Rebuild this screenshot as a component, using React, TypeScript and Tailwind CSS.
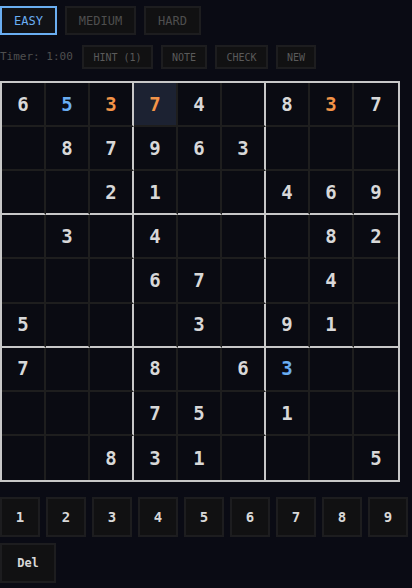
import React from "react";

type Cell = { v: number | null; c?: "blue" | "orange"; sel?: boolean };

const B = (v: number): Cell => ({ v, c: "blue" });
const O = (v: number, sel = false): Cell => ({ v, c: "orange", sel });
const N = (v: number | null): Cell => ({ v });

const board: Cell[][] = [
  [N(6), B(5), O(3), O(7, true), N(4), N(null), N(8), O(3), N(7)],
  [N(null), N(8), N(7), N(9), N(6), N(3), N(null), N(null), N(null)],
  [N(null), N(null), N(2), N(1), N(null), N(null), N(4), N(6), N(9)],
  [N(null), N(3), N(null), N(4), N(null), N(null), N(null), N(8), N(2)],
  [N(null), N(null), N(null), N(6), N(7), N(null), N(null), N(4), N(null)],
  [N(5), N(null), N(null), N(null), N(3), N(null), N(9), N(1), N(null)],
  [N(7), N(null), N(null), N(8), N(null), N(6), B(3), N(null), N(null)],
  [N(null), N(null), N(null), N(7), N(5), N(null), N(1), N(null), N(null)],
  [N(null), N(null), N(8), N(3), N(1), N(null), N(null), N(null), N(5)],
];

const mono = { fontFamily: '"DejaVu Sans Mono", "Liberation Mono", monospace' };

function SudokuCell({ cell, r, c }: { cell: Cell; r: number; c: number }) {
  const right =
    c === 8 ? "" : c === 2 || c === 5 ? "border-r-2 border-r-[#c8c8c8]" : "border-r-2 border-r-[#1e1e1e]";
  const bottom =
    r === 8 ? "" : r === 2 || r === 5 ? "border-b-2 border-b-[#c8c8c8]" : "border-b-2 border-b-[#1e1e1e]";
  const color =
    cell.c === "blue" ? "text-[#6aaef2]" : cell.c === "orange" ? "text-[#f39448]" : "text-[#d8d8d8]";
  return (
    <div
      className={`flex items-center justify-center text-[19px] font-bold ${right} ${bottom} ${color} ${
        cell.sel ? "bg-[#1c2232]" : "bg-[#0a0b12]"
      }`}
    >
      {cell.v ?? ""}
    </div>
  );
}

export default function App() {
  return (
    <div className="min-h-[588px] w-[412px] bg-[#0a0b14] overflow-hidden" style={mono}>
      <div className="flex gap-2 pt-[6px]">
        <button className="h-[29px] w-[57px] border-2 border-[#6aaef2] bg-[#111216] text-[12px] text-[#6aaef2]">
          EASY
        </button>
        <button className="h-[29px] w-[71px] border-2 border-[#1d1d1f] bg-[#111112] text-[12px] text-[#4e4e4e]">
          MEDIUM
        </button>
        <button className="h-[29px] w-[57px] border-2 border-[#1d1d1f] bg-[#111112] text-[12px] text-[#4e4e4e]">
          HARD
        </button>
      </div>
      <div className="flex items-center gap-2 mt-[10px]">
        <span className="w-[74px] text-[11px] text-[#4f4f4f] whitespace-nowrap">Timer: 1:00</span>
        <button className="h-[24px] w-[71px] border-2 border-[#1d1d1f] bg-[#111112] text-[10px] text-[#5a5a5a]">
          HINT (1)
        </button>
        <button className="h-[24px] w-[46px] border-2 border-[#1d1d1f] bg-[#111112] text-[10px] text-[#5a5a5a]">
          NOTE
        </button>
        <button className="h-[24px] w-[53px] border-2 border-[#1d1d1f] bg-[#111112] text-[10px] text-[#5a5a5a]">
          CHECK
        </button>
        <button className="h-[24px] w-[40px] border-2 border-[#1d1d1f] bg-[#111112] text-[10px] text-[#5a5a5a]">
          NEW
        </button>
      </div>
      <div className="mt-[12px] w-[400px] h-[401px] border-2 border-[#c8c8c8] grid grid-cols-9 grid-rows-9 bg-[#0a0b12]">
        {board.map((row, r) =>
          row.map((cell, c) => <SudokuCell key={`${r}-${c}`} cell={cell} r={r} c={c} />)
        )}
      </div>
      <div className="mt-[15px] flex gap-[6px]">
        {[1, 2, 3, 4, 5, 6, 7, 8, 9].map((n) => (
          <button
            key={n}
            className="h-[40px] w-[40px] shrink-0 border-2 border-[#1d1d1f] bg-[#111112] text-[14px] font-bold text-[#d8d8d8]"
          >
            {n}
          </button>
        ))}
      </div>
      <div className="mt-[6px]">
        <button className="h-[40px] w-[56px] border-2 border-[#1d1d1f] bg-[#111112] text-[12px] font-bold text-[#d8d8d8]">
          Del
        </button>
      </div>
    </div>
  );
}
